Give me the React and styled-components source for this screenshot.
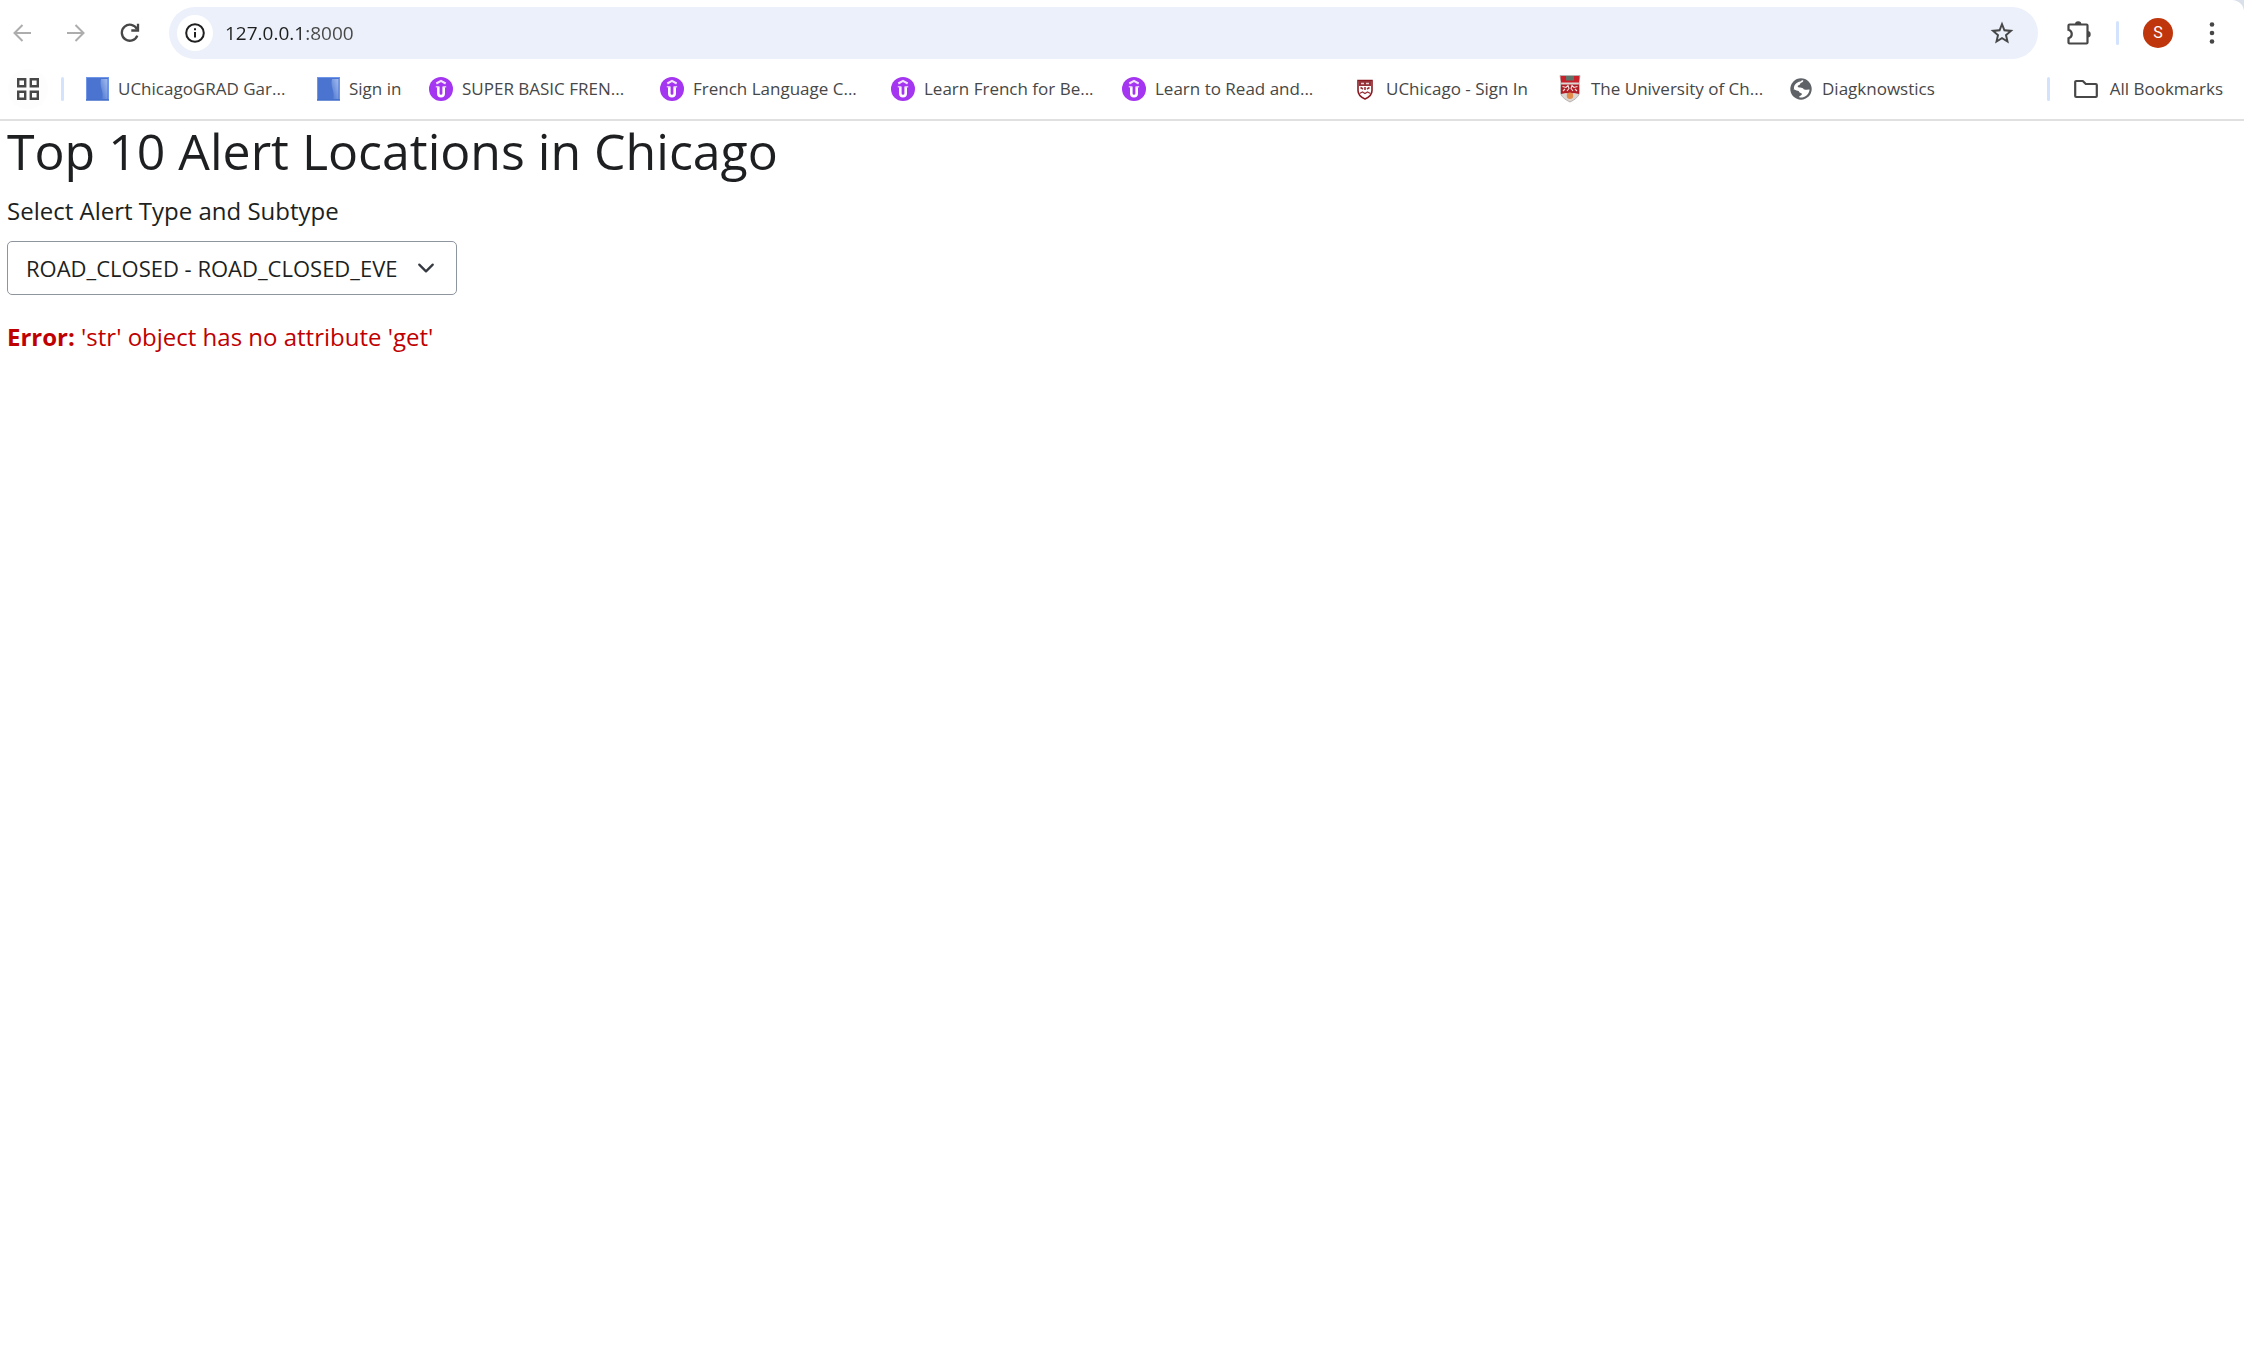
import React from "react";
import styled, { createGlobalStyle } from "styled-components";

const Global = createGlobalStyle`
  *, *::before, *::after { box-sizing: border-box; }
  body { margin: 0; background: #fff; color: #1d1f21; font-family: "Open Sans", "Noto Sans", sans-serif; }
  svg { display: block; flex: none; }
`;

const Chrome = styled.header`
  border-bottom: 2px solid #e0e0e0;
  background: #d9e0ea;
`;
const ChromeInner = styled.div`
  background: #fff;
  border-top-right-radius: 12px;
`;
const Toolbar = styled.div`
  display: flex;
  align-items: center;
  height: 66px;
  padding: 0 14px 0 4px;
`;
const IconButton = styled.button`
  display: flex;
  align-items: center;
  justify-content: center;
  flex: none;
  width: ${(p) => p.$size || 36}px;
  height: ${(p) => p.$size || 36}px;
  margin: 0;
  padding: 0;
  border: 0;
  border-radius: 50%;
  background: ${(p) => p.$bg || "transparent"};
  color: ${(p) => p.$color || "#474747"};
`;
const NavButtons = styled.nav`
  display: flex;
  gap: 18px;
  margin-right: 21px;
`;
const AddressBar = styled.div`
  display: flex;
  align-items: center;
  gap: 12px;
  flex: 1;
  min-width: 0;
  height: 52px;
  padding: 0 18px 0 8px;
  border-radius: 26px;
  background: #ebf0fa;
`;
const AddressInput = styled.input`
  flex: 1;
  min-width: 0;
  height: 30px;
  padding: 0;
  border: 0;
  outline: 0;
  background: linear-gradient(90deg, #1f1f1f 79px, #474747 79px);
  background-clip: text;
  color: #1f1f1f;
  -webkit-text-fill-color: transparent;
  font: 19px/30px "Open Sans", "Noto Sans", sans-serif;
`;
const Tools = styled.div`
  display: flex;
  align-items: center;
  margin-left: 23px;
`;
const Divider = styled.span`
  flex: none;
  width: 3px;
  height: 24px;
  margin: 0 ${(p) => p.$after}px 0 ${(p) => p.$before}px;
  border-radius: 2px;
  background: #d3e3fd;
`;
const Avatar = styled.button`
  flex: none;
  width: 30px;
  height: 30px;
  margin-right: 21px;
  padding: 0;
  border: 0;
  border-radius: 50%;
  background: #bf360c;
  color: #fff;
  font: 16px/30px Roboto, sans-serif;
`;
const Bookmarks = styled.nav`
  display: flex;
  align-items: center;
  height: 53px;
  padding: 0 21px 7px 8px;
`;
const BookmarkList = styled.div`
  display: flex;
  flex: 1;
  min-width: 0;
  overflow: hidden;
`;
const Bookmark = styled.a`
  display: flex;
  align-items: center;
  flex: none;
  gap: 9px;
  width: ${(p) => (p.$width ? p.$width + "px" : "auto")};
  color: #474747;
  font-size: 17px;
  line-height: 28px;
  text-decoration: none;
  white-space: nowrap;
`;
const AllBookmarks = styled.button`
  display: flex;
  align-items: center;
  flex: none;
  gap: 12px;
  padding: 0;
  border: 0;
  background: transparent;
  color: #474747;
  font: 17px/28px "Open Sans", "Noto Sans", sans-serif;
`;
const Page = styled.main`
  padding: 0 7px;
  font-size: 24px;
`;
const Title = styled.h2`
  margin: 0 0 12px;
  font-size: 50px;
  font-weight: 400;
  line-height: 60px;
`;
const Label = styled.label`
  display: block;
  margin-bottom: 12px;
  line-height: 36px;
`;
const SelectBox = styled.div`
  position: relative;
  width: 450px;
  max-width: 100%;
  margin-bottom: 24px;
`;
const Select = styled.select`
  display: block;
  width: 100%;
  height: 54px;
  padding: 0 58px 0 18px;
  border: 1px solid #8d959e;
  border-radius: 5px;
  background: #fff;
  color: #1d1f21;
  font: inherit;
  font-size: 22px;
  appearance: none;
`;
const Chevron = styled.svg`
  position: absolute;
  top: 18px;
  right: 22px;
  pointer-events: none;
`;
const ErrorText = styled.div`
  color: #bf0000;
  line-height: 36px;
`;

const BackIcon = () => (
  <svg width="18" height="18" viewBox="0 0 18 18" fill="none" stroke="currentColor" strokeWidth="2">
    <path d="M18 9H1.500M9.500 1 1.500 9l8 8" />
  </svg>
);
const ForwardIcon = () => (
  <svg width="18" height="18" viewBox="0 0 18 18" fill="none" stroke="currentColor" strokeWidth="2">
    <path d="M0 9h16.500M8.500 1l8 8-8 8" />
  </svg>
);
const ReloadIcon = () => (
  <svg width="20" height="20" viewBox="0 0 20 20" fill="none" stroke="currentColor" strokeWidth="2.300">
    <path d="M17.300 12.600A8 8 0 1 1 17 6.200" />
    <path d="M18 .8v6.700h-6.700" />
  </svg>
);
const InfoIcon = () => (
  <svg width="20" height="20" viewBox="0 0 20 20" fill="none" stroke="currentColor" strokeWidth="2">
    <circle cx="10" cy="10" r="8.800" />
    <path d="M10 9v5.500M10 5.200v2" />
  </svg>
);
const StarIcon = () => (
  <svg width="26" height="26" viewBox="0 0 24 24" fill="currentColor">
    <path d="M22.500 9.200l-7.700-.7L12 1.400 9.200 8.500l-7.700.7 5.800 5.100-1.700 7.500L12 17.800l6.400 4-1.700-7.500zM12 15.700l-3.700 2.300 1-4.300-3.300-2.900 4.400-.4L12 6.300l1.600 4.100 4.400.4-3.300 2.900 1 4.300z" />
  </svg>
);
const PuzzleIcon = () => (
  <svg width="26" height="26" viewBox="0 0 26 26">
    <path
      d="M3.500 4.500h17a1 1 0 0 1 1 1v17a1 1 0 0 1-1 1h-17a1 1 0 0 1-1-1v-4.200a4.400 4.400 0 0 0 0-8.500V5.500a1 1 0 0 1 1-1z"
      fill="none" stroke="currentColor" strokeWidth="2.200"
    />
    <path d="M9 4.500a3.200 3.200 0 0 1 6.400 0zM21.500 11a3.200 3.200 0 0 1 0 6.400z" fill="currentColor" />
  </svg>
);
const DotsIcon = () => (
  <svg width="6" height="24" viewBox="0 0 6 24" fill="currentColor">
    <circle cx="3" cy="3.500" r="2.300" />
    <circle cx="3" cy="12" r="2.300" />
    <circle cx="3" cy="20.500" r="2.300" />
  </svg>
);
const AppsIcon = () => (
  <svg width="22" height="22" viewBox="0 0 22 22" fill="none" stroke="currentColor" strokeWidth="2.400">
    <path d="M1.200 1.200h7v7h-7zM13.800 1.200h7v7h-7zM1.200 13.800h7v7h-7zM13.800 13.800h7v7h-7z" />
  </svg>
);
const FolderIcon = () => (
  <svg width="24" height="20" viewBox="0 0 24 20" fill="none" stroke="currentColor" strokeWidth="2.200" strokeLinejoin="round">
    <path d="M2.200 2h6.600l3 3h10a1 1 0 0 1 1 1v11a1 1 0 0 1-1 1H2.200a1 1 0 0 1-1-1V3a1 1 0 0 1 1-1z" />
  </svg>
);
const SquareIcon = () => (
  <svg width="23" height="24" viewBox="0 0 23 24">
    <defs>
      <linearGradient id="gloss" x1="0" x2="1" y1="1" y2="0">
        <stop offset="0" stopColor="#4a74d0" />
        <stop offset="1" stopColor="#a4bdf0" />
      </linearGradient>
    </defs>
    <rect x=".5" y=".5" width="22" height="22.500" fill="#4a74d0" stroke="#6f96e8" />
    <path d="M15 2h6.500v20H16c2.500-7-3-12-1-20z" fill="url(#gloss)" />
    <path d="M0 23h23" stroke="#2f5bbd" />
  </svg>
);
const UdemyIcon = () => (
  <svg width="24" height="24" viewBox="0 0 24 24">
    <circle cx="12" cy="12" r="12" fill="#a435f0" />
    <path d="M7.300 6.500 12 3.900l4.700 2.600" fill="none" stroke="#f3e2ff" strokeWidth="2.200" />
    <path d="M9.300 9.500v6.900a2.700 2.700 0 0 0 5.400 0V9.500" fill="none" stroke="#fff" strokeWidth="2.600" />
    <path d="M6.800 9.800h3M14.200 9.800h3" stroke="#e3c0fb" strokeWidth="1.600" />
  </svg>
);
const ShieldIcon = () => (
  <svg width="24" height="24" viewBox="0 0 24 24">
    <path d="M5 3.500h14v10c0 4.500-3.500 7-7 8.500-3.500-1.500-7-4-7-8.500z" fill="#fff" stroke="#8a1a22" strokeWidth="1.600" />
    <path d="M6 4h12v5H6z" fill="#96323a" />
    <path d="M8 6.500h3M13 6.500h3" stroke="#ead0d2" strokeWidth="1.400" />
    <path d="M7.500 10.500l2.500 1.500M16.500 10.500 14 12M12 10v3" fill="none" stroke="#96323a" strokeWidth="1.600" />
    <path d="M6.500 16.500l3-1.500 2.500 1.500 2.500-1.500 3 1.500" fill="none" stroke="#96323a" strokeWidth="1.300" />
  </svg>
);
const CrestIcon = () => (
  <svg width="24" height="28" viewBox="0 0 24 28">
    <path d="M2 .5h20l-1 6 .5 10c0 5-4.500 8-9.500 10.500C7 24.500 2.500 21.500 2.500 16.500L3 6.500z" fill="#dcd6d3" stroke="#a9a3a1" strokeWidth=".8" />
    <path d="M2.500 1h19L21 7.500H3z" fill="#c9202c" />
    <path d="M8 1h8v4.500H8z" fill="#5f7468" />
    <path d="M3 9.500h18v9.500l-5-1-4 1-4-1-5 1z" fill="#b01e28" />
    <path d="M4.500 11.500l3.500 1 2-2 1 3-2 2.500M19.500 11.500l-3.500 1-2-2-1 3 2 2.500M5 16l2-2M19 16l-2-2" fill="none" stroke="#f5e3e1" strokeWidth="1.100" />
    <circle cx="12" cy="20.800" r="3.200" fill="#e58b4a" />
  </svg>
);
const GlobeIcon = () => (
  <svg width="24" height="24" viewBox="0 0 24 24">
    <circle cx="12" cy="12" r="10.700" fill="#5f6368" />
    <path d="M14.300 3.400c0 2.300-3 1.900-3.200 3.700-.2 1.500-2.600 1-2.300 2.600.3 1.300 4.600.2 5.600 2.100.8 1.600 3.300.4 6.100.6-.1 3.200-2.400 6.300-5.600 7.500-1.400.5-3.200.8-4.600.4-.4-1.500 2.300-1.600 2.600-3 .3-1.600-2.500-1-2.800-2.600-.2-1.300-2.400-.5-3.600-1.600-1-.9-1.900-.9-3.100-.9-.1-5 5-9.700 10.900-8.800z" fill="#fff" />
    <path d="M3 13.500C2 7 7 2.500 13 3l-1.500 1.500C7 5 4.500 8.500 5 12z" fill="#5f6368" />
  </svg>
);

const bookmarks = [
  { title: "UChicagoGRAD Gar...", Icon: SquareIcon, width: 231 },
  { title: "Sign in", Icon: SquareIcon, width: 112 },
  { title: "SUPER BASIC FREN...", Icon: UdemyIcon, width: 231 },
  { title: "French Language C...", Icon: UdemyIcon, width: 231 },
  { title: "Learn French for Be...", Icon: UdemyIcon, width: 231 },
  { title: "Learn to Read and...", Icon: UdemyIcon, width: 231 },
  { title: "UChicago - Sign In", Icon: ShieldIcon, width: 205 },
  { title: "The University of Ch...", Icon: CrestIcon, width: 231 },
  { title: "Diagknowstics", Icon: GlobeIcon },
];

export default function App() {
  return (
    <>
      <Global />
      <Chrome>
        <ChromeInner>
          <Toolbar>
            <NavButtons>
              <IconButton aria-label="Back" $color="#adadad"><BackIcon /></IconButton>
              <IconButton aria-label="Forward" $color="#adadad"><ForwardIcon /></IconButton>
              <IconButton aria-label="Reload"><ReloadIcon /></IconButton>
            </NavButtons>
            <AddressBar>
              <IconButton aria-label="Site information" $bg="#fff" $color="#1f1f1f"><InfoIcon /></IconButton>
              <AddressInput aria-label="Address" defaultValue="127.0.0.1:8000" />
              <IconButton aria-label="Bookmark this page"><StarIcon /></IconButton>
            </AddressBar>
            <Tools>
              <IconButton aria-label="Extensions"><PuzzleIcon /></IconButton>
              <Divider $before={19} $after={24} />
              <Avatar aria-label="Profile S">S</Avatar>
              <IconButton aria-label="Menu"><DotsIcon /></IconButton>
            </Tools>
          </Toolbar>
          <Bookmarks>
            <IconButton aria-label="Apps" $size={40} $bg="#fdfdfd"><AppsIcon /></IconButton>
            <Divider $before={13} $after={22} />
            <BookmarkList>
              {bookmarks.map(({ title, Icon, width }) => (
                <Bookmark href="#" key={title} $width={width}>
                  <Icon />
                  {title}
                </Bookmark>
              ))}
            </BookmarkList>
            <Divider $before={24} $after={24} />
            <AllBookmarks>
              <FolderIcon />
              All Bookmarks
            </AllBookmarks>
          </Bookmarks>
        </ChromeInner>
      </Chrome>
      <Page>
        <Title>Top 10 Alert Locations in Chicago</Title>
        <Label htmlFor="alert">Select Alert Type and Subtype</Label>
        <SelectBox>
          <Select id="alert">
            <option>ROAD_CLOSED - ROAD_CLOSED_EVENT</option>
          </Select>
          <Chevron width="18" height="18" viewBox="0 0 16 16">
            <path d="m2 5 6 6 6-6" fill="none" stroke="#343a40" strokeWidth="2" strokeLinecap="round" strokeLinejoin="round" />
          </Chevron>
        </SelectBox>
        <ErrorText>
          <strong>Error:</strong> 'str' object has no attribute 'get'
        </ErrorText>
      </Page>
    </>
  );
}
